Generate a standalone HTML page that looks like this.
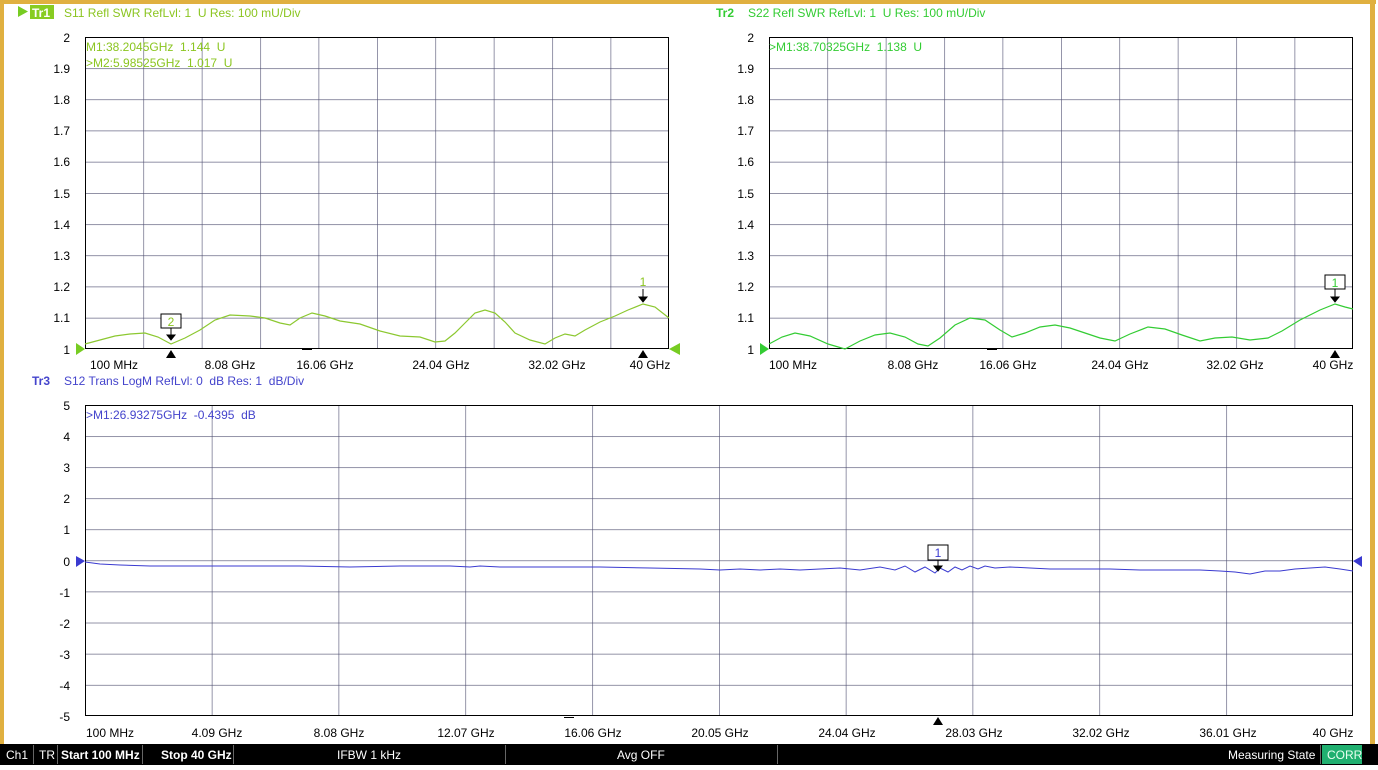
<!DOCTYPE html>
<html><head><meta charset="utf-8"><style>
html,body{margin:0;padding:0;background:#fff;}
body{width:1378px;height:765px;overflow:hidden;position:relative;font-family:"Liberation Sans",Arial,sans-serif;}
svg text{font-family:"Liberation Sans",Arial,sans-serif;font-size:12px;white-space:pre;}
</style></head><body>
<svg width="1378" height="765" viewBox="0 0 1378 765" xmlns="http://www.w3.org/2000/svg" xml:space="preserve">
<defs>
<pattern id="g1" x="85" y="37" width="58.4" height="31.2" patternUnits="userSpaceOnUse"><path d="M0 0V31.2M0 0H58.4" stroke="#4e4e70" stroke-width="1.2" fill="none"/></pattern>
<pattern id="g2" x="769" y="37" width="58.4" height="31.2" patternUnits="userSpaceOnUse"><path d="M0 0V31.2M0 0H58.4" stroke="#4e4e70" stroke-width="1.2" fill="none"/></pattern>
<pattern id="g3" x="85" y="405" width="126.8" height="31.1" patternUnits="userSpaceOnUse"><path d="M0 0V31.1M0 0H126.8" stroke="#4e4e70" stroke-width="1.2" fill="none"/></pattern>
</defs>
<rect width="1378" height="765" fill="#fff"/>
<rect x="0" y="0" width="1376" height="4" fill="#e0b040"/>
<rect x="0" y="0" width="4" height="744" fill="#e0b040"/>
<rect x="1370" y="0" width="5" height="744" fill="#e0b040"/>

<polygon points="18,6 28,11.5 18,17" fill="#77cc22"/>
<rect x="30" y="5" width="24" height="14" fill="#88cc22"/>
<text x="32" y="17" fill="#fff" font-weight="bold">Tr1</text>
<text x="64" y="17" fill="#8bc520">S11 Refl SWR RefLvl: 1  U Res: 100 mU/Div</text>
<text x="716" y="17" fill="#33cc33" font-weight="bold">Tr2</text>
<text x="748" y="17" fill="#33cc33">S22 Refl SWR RefLvl: 1  U Res: 100 mU/Div</text>
<text x="32" y="385" fill="#4444cc" font-weight="bold">Tr3</text>
<text x="64" y="385" fill="#4444cc">S12 Trans LogM RefLvl: 0  dB Res: 1  dB/Div</text>

<rect x="85" y="37" width="584" height="312" fill="url(#g1)"/>
<rect x="85.5" y="37.5" width="583" height="311" fill="none" stroke="#000"/>
<g fill="#000" text-anchor="end">
<text x="70" y="42">2</text><text x="70" y="73">1.9</text><text x="70" y="104">1.8</text><text x="70" y="135">1.7</text><text x="70" y="166">1.6</text><text x="70" y="198">1.5</text><text x="70" y="229">1.4</text><text x="70" y="260">1.3</text><text x="70" y="291">1.2</text><text x="70" y="322">1.1</text><text x="70" y="354">1</text>
</g>
<g fill="#000" text-anchor="middle">
<text x="114" y="369">100 MHz</text><text x="230" y="369">8.08 GHz</text><text x="325" y="369">16.06 GHz</text><text x="441" y="369">24.04 GHz</text><text x="557" y="369">32.02 GHz</text><text x="650" y="369">40 GHz</text>
</g>
<text x="86" y="51" fill="#8bc520">M1:38.2045GHz  1.144  U</text>
<text x="86" y="67" fill="#8bc520">&gt;M2:5.98525GHz  1.017  U</text>
<polyline fill="none" stroke="#8cc830" stroke-width="1.2" points="85,344 100,340 115,336 130,334 145,333 158,337 171,344 185,338 200,330 215,320 230,315 250,316 265,318 280,323 290,325 300,318 312,313 325,316 340,321 360,324 380,331 400,336 420,337 435,342 445,341 455,333 465,323 475,313 485,310 495,313 505,322 515,333 530,340 545,344 555,338 565,334 575,336 585,330 600,322 615,316 628,310 643,304 655,307 669,318"/>
<polygon points="669,349 680,343 680,355" fill="#77cc22"/>
<polygon points="76,343 85,349 76,355" fill="#77cc22"/>
<path d="M302 349.5h10" stroke="#000"/>
<rect x="161" y="314" width="20" height="14" fill="#fff" stroke="#000"/><text x="171" y="326" text-anchor="middle" fill="#8bc520">2</text>
<path d="M171 328v9M167 335l4 5 4-5z" stroke="#000" fill="#000"/>
<text x="643" y="286" text-anchor="middle" fill="#8bc520">1</text>
<path d="M643 289v10M639 297l4 5 4-5z" stroke="#000" fill="#000"/>
<polygon points="166,358 171,350 176,358" fill="#000"/>
<polygon points="638,358 643,350 648,358" fill="#000"/>

<rect x="769" y="37" width="584" height="312" fill="url(#g2)"/>
<rect x="769.5" y="37.5" width="583" height="311" fill="none" stroke="#000"/>
<g fill="#000" text-anchor="end">
<text x="754" y="42">2</text><text x="754" y="73">1.9</text><text x="754" y="104">1.8</text><text x="754" y="135">1.7</text><text x="754" y="166">1.6</text><text x="754" y="198">1.5</text><text x="754" y="229">1.4</text><text x="754" y="260">1.3</text><text x="754" y="291">1.2</text><text x="754" y="322">1.1</text><text x="754" y="354">1</text>
</g>
<g fill="#000" text-anchor="middle">
<text x="793" y="369">100 MHz</text><text x="913" y="369">8.08 GHz</text><text x="1008" y="369">16.06 GHz</text><text x="1120" y="369">24.04 GHz</text><text x="1235" y="369">32.02 GHz</text><text x="1333" y="369">40 GHz</text>
</g>
<text x="769" y="51" fill="#33cc33">&gt;M1:38.70325GHz  1.138  U</text>
<polyline fill="none" stroke="#33cc33" stroke-width="1.2" points="769,344 782,337 795,333 810,336 828,344 845,349 860,341 875,335 890,333 905,337 918,344 928,346 940,338 955,325 970,318 985,320 1000,330 1012,337 1025,333 1040,327 1055,325 1070,328 1085,333 1100,338 1115,341 1130,334 1148,327 1165,329 1182,335 1200,341 1215,338 1232,337 1250,340 1268,338 1282,331 1300,320 1320,310 1335,304 1345,307 1353,309"/>
<polygon points="760,343 769,349 760,355" fill="#33cc33"/>
<path d="M987 349.5h10" stroke="#000"/>
<rect x="1325" y="275" width="20" height="14" fill="#fff" stroke="#000"/><text x="1335" y="287" text-anchor="middle" fill="#33cc33">1</text>
<path d="M1335 289v9M1331 297l4 5 4-5z" stroke="#000" fill="#000"/>
<polygon points="1330,358 1335,350 1340,358" fill="#000"/>

<rect x="85" y="405" width="1268" height="311" fill="url(#g3)"/>
<rect x="85.5" y="405.5" width="1267" height="310" fill="none" stroke="#000"/>
<g fill="#000" text-anchor="end">
<text x="70" y="410">5</text><text x="70" y="441">4</text><text x="70" y="472">3</text><text x="70" y="503">2</text><text x="70" y="534">1</text><text x="70" y="566">0</text><text x="70" y="597">-1</text><text x="70" y="628">-2</text><text x="70" y="659">-3</text><text x="70" y="690">-4</text><text x="70" y="721">-5</text>
</g>
<g fill="#000" text-anchor="middle">
<text x="110" y="737">100 MHz</text><text x="217" y="737">4.09 GHz</text><text x="339" y="737">8.08 GHz</text><text x="466" y="737">12.07 GHz</text><text x="593" y="737">16.06 GHz</text><text x="720" y="737">20.05 GHz</text><text x="847" y="737">24.04 GHz</text><text x="974" y="737">28.03 GHz</text><text x="1101" y="737">32.02 GHz</text><text x="1228" y="737">36.01 GHz</text><text x="1333" y="737">40 GHz</text>
</g>
<text x="86" y="419" fill="#4444cc">&gt;M1:26.93275GHz  -0.4395  dB</text>
<polyline fill="none" stroke="#3a3ad0" stroke-width="1" points="85,562 100,564 120,565 150,566 200,566 250,566 300,566 350,567 400,566 450,566 470,567 480,566 500,567 550,567 600,567 650,568 700,569 720,570 740,569 760,570 780,569 800,570 820,569 840,568 860,570 880,567 895,570 905,566 915,572 925,567 935,573 940,568 948,572 955,567 962,570 970,566 978,569 985,566 995,568 1010,567 1030,568 1050,569 1080,569 1110,569 1140,570 1170,570 1200,570 1220,571 1235,572 1250,574 1265,571 1280,571 1295,569 1310,568 1325,567 1340,569 1353,571"/>
<polygon points="76,556 85,561 76,567" fill="#3a3ad0"/>
<polygon points="1362,556 1353,561 1362,567" fill="#3a3ad0"/>
<path d="M564 717.5h10" stroke="#000"/>
<rect x="928" y="545" width="20" height="15" fill="#fff" stroke="#000"/><text x="938" y="557" text-anchor="middle" fill="#3a3ad0">1</text>
<path d="M938 560v7M934 566l4 5 4-5z" stroke="#000" fill="#000"/>
<polygon points="933,725 938,717 943,725" fill="#000"/>

<rect x="0" y="744" width="1378" height="21" fill="#000"/>
<g stroke="#666" stroke-width="1">
<path d="M33.5 745v19M57.5 745v19M142.5 745v19M233.5 745v19M505.5 745v19M777.5 745v19M1320.5 745v19"/>
</g>
<g fill="#fff">
<text x="6" y="759">Ch1</text>
<text x="39" y="759">TR</text>
<text x="61" y="759" font-weight="bold">Start 100 MHz</text>
<text x="161" y="759" font-weight="bold">Stop 40 GHz</text>
<text x="337" y="759">IFBW 1 kHz</text>
<text x="617" y="759">Avg OFF</text>
<text x="1228" y="759">Measuring State</text>
</g>
<rect x="1322" y="745" width="40" height="19" fill="#20b070"/>
<text x="1327" y="759" fill="#e8fff0">CORR</text>
</svg>
</body></html>
